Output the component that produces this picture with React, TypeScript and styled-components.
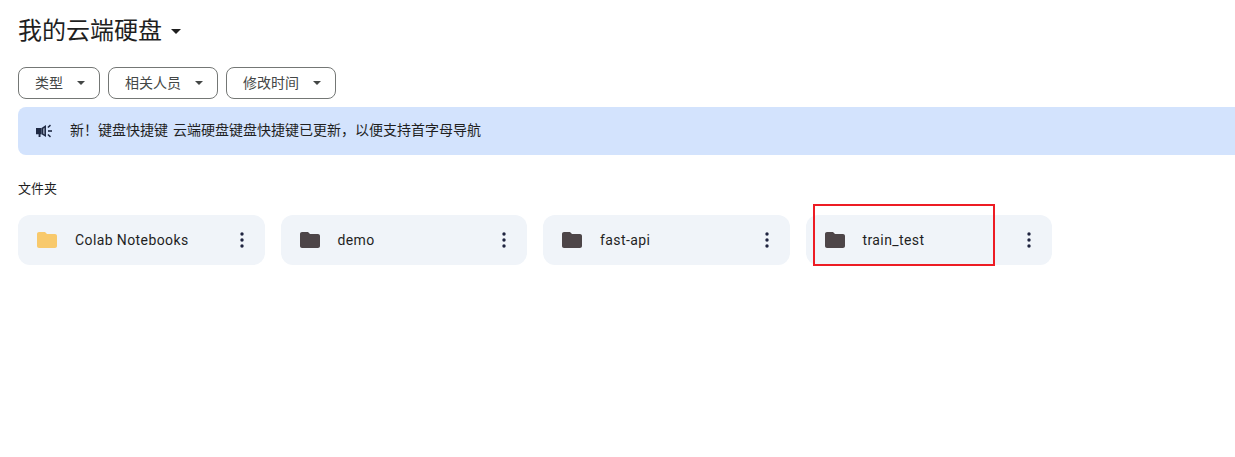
import React from "react";
import styled, { createGlobalStyle } from "styled-components";

const Global = createGlobalStyle`
  html, body { margin: 0; padding: 0; background: #fff; overflow: hidden; }
  body { font-family: Roboto, "Noto Sans CJK SC", sans-serif; color: #1f1f1f; }
`;

const Page = styled.div`
  position: relative;
  width: 1235px;
  height: 457px;
  overflow: hidden;
  padding: 14px 0 0 18px;
  box-sizing: border-box;
`;

const TitleRow = styled.div`
  display: flex;
  align-items: center;
  height: 34px;
  gap: 9px;
`;

const Title = styled.h1`
  margin: 0;
  font-size: 24px;
  font-weight: 400;
  line-height: 34px;
  color: #1f1f1f;
`;

const Caret = styled.span<{ $size: number; $color: string; $lift?: number }>`
  width: 0;
  height: 0;
  margin-top: ${(p) => p.$lift ?? 1}px;
  border-left: ${(p) => p.$size}px solid transparent;
  border-right: ${(p) => p.$size}px solid transparent;
  border-top: ${(p) => p.$size}px solid ${(p) => p.$color};
`;

const Filters = styled.div`
  display: flex;
  gap: 8px;
  margin-top: 19px;
`;

const FilterButton = styled.button<{ $w: number }>`
  display: flex;
  align-items: center;
  justify-content: space-between;
  box-sizing: border-box;
  width: ${(p) => p.$w}px;
  height: 32px;
  padding: 0 14px 0 16px;
  background: #fff;
  border: 1px solid #747775;
  border-radius: 8px;
  font-family: inherit;
  font-size: 14px;
  line-height: 30px;
  color: #444746;
`;

const Banner = styled.div`
  display: flex;
  align-items: center;
  gap: 17px;
  box-sizing: border-box;
  width: 1300px;
  height: 48px;
  margin-top: 8px;
  padding: 0 0 0 17px;
  background: #d3e3fd;
  border-radius: 8px;
  font-size: 14px;
  line-height: 46px;
  color: #1f1f1f;
`;

const BannerText = styled.span`
  display: flex;
  gap: 5px;
  margin-top: -2px;
`;

const SectionLabel = styled.div`
  margin-top: 25px;
  font-size: 13px;
  line-height: 18px;
  color: #1f1f1f;
`;

const FolderGrid = styled.div`
  display: flex;
  gap: 16px;
  margin-top: 17px;
`;

const FolderCard = styled.div`
  display: flex;
  align-items: center;
  box-sizing: border-box;
  width: 246.5px;
  height: 50px;
  padding: 0 15px 0 17px;
  background: #f0f4f9;
  border-radius: 12px;
`;

const FolderName = styled.span`
  flex: 1;
  margin-left: 16px;
  font-size: 14px;
  font-weight: 400;
  letter-spacing: 0.4px;
  color: #1f1f1f;
`;

const Annotation = styled.div`
  position: absolute;
  left: 813px;
  top: 204px;
  width: 182px;
  height: 62px;
  box-sizing: border-box;
  border: 2px solid #ed1c24;
  pointer-events: none;
`;

const FolderIcon = ({ color }: { color: string }) => (
  <svg width="24" height="24" viewBox="0 0 24 24" fill={color} style={{ flexShrink: 0 }}>
    <path d="M4 4c-1.1 0-2 .9-2 2v12c0 1.1.9 2 2 2h16c1.1 0 2-.9 2-2V8c0-1.1-.9-2-2-2h-8l-2-2H4z" />
  </svg>
);

const MoreIcon = () => (
  <svg width="16" height="18" viewBox="0 0 16 18" fill="#1f2440" style={{ flexShrink: 0 }}>
    <circle cx="8" cy="3" r="1.7" />
    <circle cx="8" cy="9" r="1.7" />
    <circle cx="8" cy="15" r="1.7" />
  </svg>
);

const MegaphoneIcon = () => (
  <svg width="18" height="18" viewBox="0 0 18 18" style={{ flexShrink: 0 }}>
    <path d="M1 6h5.5v6.2H5.5v2.8H3.6v-2.8H1z" fill="#1f2a44" />
    <path d="M6.5 6L11 3v12l-4.5-2.8z" fill="#1f2a44" />
    <path d="M8 6.8l1.6-1v6.6l-1.6-1z" fill="#8d97ad" />
    <rect x="13" y="8.2" width="4" height="1.6" fill="#1f2a44" />
    <path d="M12.4 4.9l2.6-2.4 1 1.2-2.6 2.4zM12.4 13.1l2.6 2.4 1-1.2-2.6-2.4z" fill="#1f2a44" />
  </svg>
);

const folders = [
  { name: "Colab Notebooks", color: "#f8c96c" },
  { name: "demo", color: "#4d4548" },
  { name: "fast-api", color: "#4d4548" },
  { name: "train_test", color: "#4d4548" },
];

const filters = [
  { label: "类型", w: 82 },
  { label: "相关人员", w: 110 },
  { label: "修改时间", w: 110 },
];

export default function App() {
  return (
    <Page>
      <Global />
      <TitleRow>
        <Title>我的云端硬盘</Title>
        <Caret $size={5} $color="#1f1f1f" />
      </TitleRow>
      <Filters>
        {filters.map((f) => (
          <FilterButton key={f.label} $w={f.w}>
            <span>{f.label}</span>
            <Caret $size={4} $color="#444746" $lift={0} />
          </FilterButton>
        ))}
      </Filters>
      <Banner>
        <MegaphoneIcon />
        <BannerText>
          <span>新！键盘快捷键</span>
          <span>云端硬盘键盘快捷键已更新，以便支持首字母导航</span>
        </BannerText>
      </Banner>
      <SectionLabel>文件夹</SectionLabel>
      <FolderGrid>
        {folders.map((f) => (
          <FolderCard key={f.name}>
            <FolderIcon color={f.color} />
            <FolderName>{f.name}</FolderName>
            <MoreIcon />
          </FolderCard>
        ))}
      </FolderGrid>
      <Annotation />
    </Page>
  );
}
